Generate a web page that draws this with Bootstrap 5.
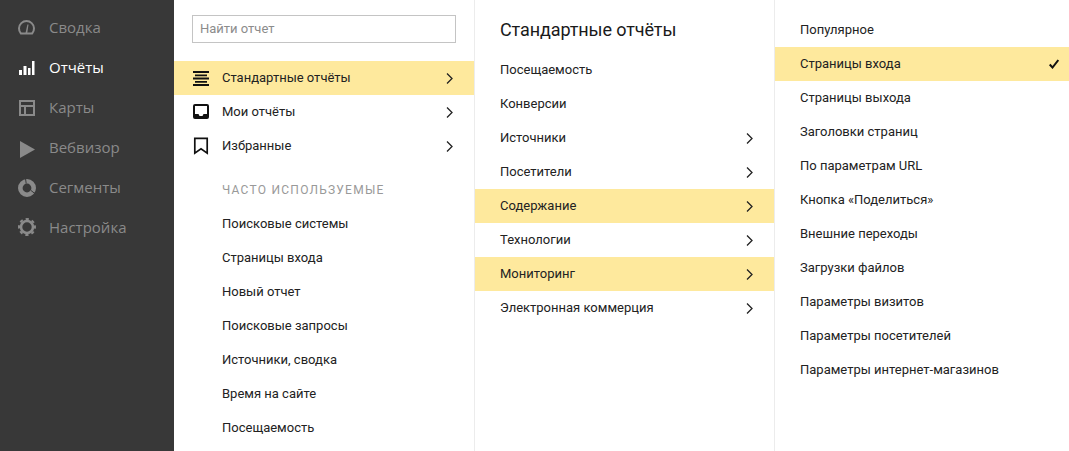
<!DOCTYPE html>
<html lang="ru">
<head>
<meta charset="utf-8">
<title>Отчёты</title>
<link href="https://cdn.jsdelivr.net/npm/bootstrap@5.3.0/dist/css/bootstrap.min.css" rel="stylesheet">
<style>
html,body{height:451px;overflow:hidden;background:#fff}
body{font-family:Roboto,"Liberation Sans",sans-serif;font-size:13px;color:#222;line-height:34px}
.shell{height:451px}
.side{width:174px;background:#383838;padding-top:7px;font-family:"Open Sans","Liberation Sans",sans-serif;font-size:15px;line-height:40px;flex:none}
.side-item{height:40px;color:#8a8a8a;padding-left:18px;gap:13px}
.side-item.on{color:#fff}
.side-item svg{width:18px;height:18px;flex:none;fill:currentColor;overflow:visible}
.pane{height:451px;overflow:hidden;flex:none;border-right:1px solid #ececec}
.p1{width:301px}
.p2{width:300px}
.p3{width:294px;border-right:0}
.find{display:block;margin:15px 18px 0;width:264px;height:28px;border:1px solid #c4c4c4;padding:0 7px;font-size:13px;color:#333;font-family:inherit;border-radius:0;outline:0}
.find::placeholder{color:#8c8c8c;opacity:1}
.top-rows{margin-top:18px}
.rowi{height:34px;padding-left:25px;padding-right:21px;color:#222}
.p1 .rowi{padding-left:48px;position:relative}
.rowi.hot{background:#fee99d}
.ico{position:absolute;left:19px;top:9px;width:17px;height:17px;overflow:visible;fill:#111}
.chev{width:7px;height:11px;flex:none;fill:none;stroke:#222;stroke-width:1.3}
.p3 .rowi{padding-right:10px}
.chk{width:10px;height:10px;flex:none;fill:none;stroke:#111;stroke-width:2}
.cap{font-size:12px;letter-spacing:1.25px;color:#999;padding-left:48px;margin-top:10px;height:34px}
.ttl{font-size:18px;letter-spacing:-.1px;line-height:24px;padding:18px 25px 0;height:53px;color:#1a1a1a}
.third-list{margin-top:-3px}
</style>
</head>
<body>
<div class="shell d-flex">
  <nav class="side">
    <div class="side-item d-flex align-items-center"><svg viewBox="0 0 18 18"><path fill="none" stroke="currentColor" stroke-width="2" d="M2.900 15.500A7.500 7.500 0 1 1 14.100 15.500z"/><path d="M9.400 6.500h1.100l-1.300 9H7.400z"/></svg><span>Сводка</span></div>
    <div class="side-item on d-flex align-items-center"><svg viewBox="0 0 18 18"><path d="M1 12h3v5H1zM5.500 8h3v9h-3zM10 10h2.500v7H10zM14 3h2.500v14H14z"/></svg><span>Отчёты</span></div>
    <div class="side-item d-flex align-items-center"><svg viewBox="0 0 18 18"><path fill-rule="evenodd" d="M1 2h16v16H1zm2 2v3h12V4zm0 5v7h3V9zm5 0v7h7V9z"/></svg><span>Карты</span></div>
    <div class="side-item d-flex align-items-center"><svg viewBox="0 0 18 18"><path d="M2 3l15 8.500L2 20z"/></svg><span>Вебвизор</span></div>
    <div class="side-item d-flex align-items-center"><svg viewBox="0 0 18 18"><circle cx="9" cy="10" r="6.700" fill="none" stroke="currentColor" stroke-width="4.600"/><path fill="none" stroke="#383838" stroke-width="1" d="M7.500 0.500L8.200 5.500M13 12.500L17.500 16"/></svg><span>Сегменты</span></div>
    <div class="side-item d-flex align-items-center"><svg viewBox="0 0 18 18"><circle cx="9" cy="9" r="6" fill="none" stroke="currentColor" stroke-width="2.600"/><circle cx="9" cy="9" r="8" fill="none" stroke="currentColor" stroke-width="2" stroke-dasharray="3.200 3.083" transform="rotate(-11.500 9 9)"/></svg><span>Настройка</span></div>
  </nav>

  <section class="pane p1">
    <input class="find" placeholder="Найти отчет" aria-label="Найти отчет">
    <div class="top-rows">
      <div class="rowi hot d-flex justify-content-between align-items-center"><svg class="ico" viewBox="0 0 17 17"><path d="M0 1h16v2H0zM2 4.500h12V6.200H2zM0 7.500h16v2H0zM2 11h12v1.700H2zM0 14h16v2H0z"/></svg><span>Стандартные отчёты</span><svg class="chev" viewBox="0 0 7 11"><path d="M1 .5L6 5.500 1 10.500"/></svg></div>
      <div class="rowi d-flex justify-content-between align-items-center"><svg class="ico" viewBox="0 0 17 17"><path fill-rule="evenodd" d="M2 0h12a2 2 0 0 1 2 2v11a2 2 0 0 1-2 2H2a2 2 0 0 1-2-2V2a2 2 0 0 1 2-2zm0 2v8h3.500l1 2h3l1-2H14V2z"/></svg><span>Мои отчёты</span><svg class="chev" viewBox="0 0 7 11"><path d="M1 .5L6 5.500 1 10.500"/></svg></div>
      <div class="rowi d-flex justify-content-between align-items-center"><svg class="ico" viewBox="0 0 17 17"><path fill="none" stroke="#111" stroke-width="1.700" d="M1.800 .4h12.400v14.800L8 10.800l-6.200 4.400z"/></svg><span>Избранные</span><svg class="chev" viewBox="0 0 7 11"><path d="M1 .5L6 5.500 1 10.500"/></svg></div>
    </div>
    <div class="cap">ЧАСТО ИСПОЛЬЗУЕМЫЕ</div>
    <div class="rowi">Поисковые системы</div>
    <div class="rowi">Страницы входа</div>
    <div class="rowi">Новый отчет</div>
    <div class="rowi">Поисковые запросы</div>
    <div class="rowi">Источники, сводка</div>
    <div class="rowi">Время на сайте</div>
    <div class="rowi">Посещаемость</div>
  </section>

  <section class="pane p2">
    <div class="ttl">Стандартные отчёты</div>
    <div class="rowi d-flex justify-content-between align-items-center"><span>Посещаемость</span></div>
    <div class="rowi d-flex justify-content-between align-items-center"><span>Конверсии</span></div>
    <div class="rowi d-flex justify-content-between align-items-center"><span>Источники</span><svg class="chev" viewBox="0 0 7 11"><path d="M1 .5L6 5.500 1 10.500"/></svg></div>
    <div class="rowi d-flex justify-content-between align-items-center"><span>Посетители</span><svg class="chev" viewBox="0 0 7 11"><path d="M1 .5L6 5.500 1 10.500"/></svg></div>
    <div class="rowi hot d-flex justify-content-between align-items-center"><span>Содержание</span><svg class="chev" viewBox="0 0 7 11"><path d="M1 .5L6 5.500 1 10.500"/></svg></div>
    <div class="rowi d-flex justify-content-between align-items-center"><span>Технологии</span><svg class="chev" viewBox="0 0 7 11"><path d="M1 .5L6 5.500 1 10.500"/></svg></div>
    <div class="rowi hot d-flex justify-content-between align-items-center"><span>Мониторинг</span><svg class="chev" viewBox="0 0 7 11"><path d="M1 .5L6 5.500 1 10.500"/></svg></div>
    <div class="rowi d-flex justify-content-between align-items-center"><span>Электронная коммерция</span><svg class="chev" viewBox="0 0 7 11"><path d="M1 .5L6 5.500 1 10.500"/></svg></div>
  </section>

  <section class="pane p3 pt-3 flex-grow-1">
    <div class="third-list">
    <div class="rowi">Популярное</div>
    <div class="rowi hot d-flex justify-content-between align-items-center"><span>Страницы входа</span><svg class="chk" viewBox="0 0 10 10"><path d="M.7 5.500l2.800 3L9.300 1"/></svg></div>
    <div class="rowi">Страницы выхода</div>
    <div class="rowi">Заголовки страниц</div>
    <div class="rowi">По параметрам URL</div>
    <div class="rowi">Кнопка «Поделиться»</div>
    <div class="rowi">Внешние переходы</div>
    <div class="rowi">Загрузки файлов</div>
    <div class="rowi">Параметры визитов</div>
    <div class="rowi">Параметры посетителей</div>
    <div class="rowi">Параметры интернет-магазинов</div>
    </div>
  </section>
</div>
<script src="https://cdn.jsdelivr.net/npm/bootstrap@5.3.0/dist/js/bootstrap.bundle.min.js"></script>
</body>
</html>
